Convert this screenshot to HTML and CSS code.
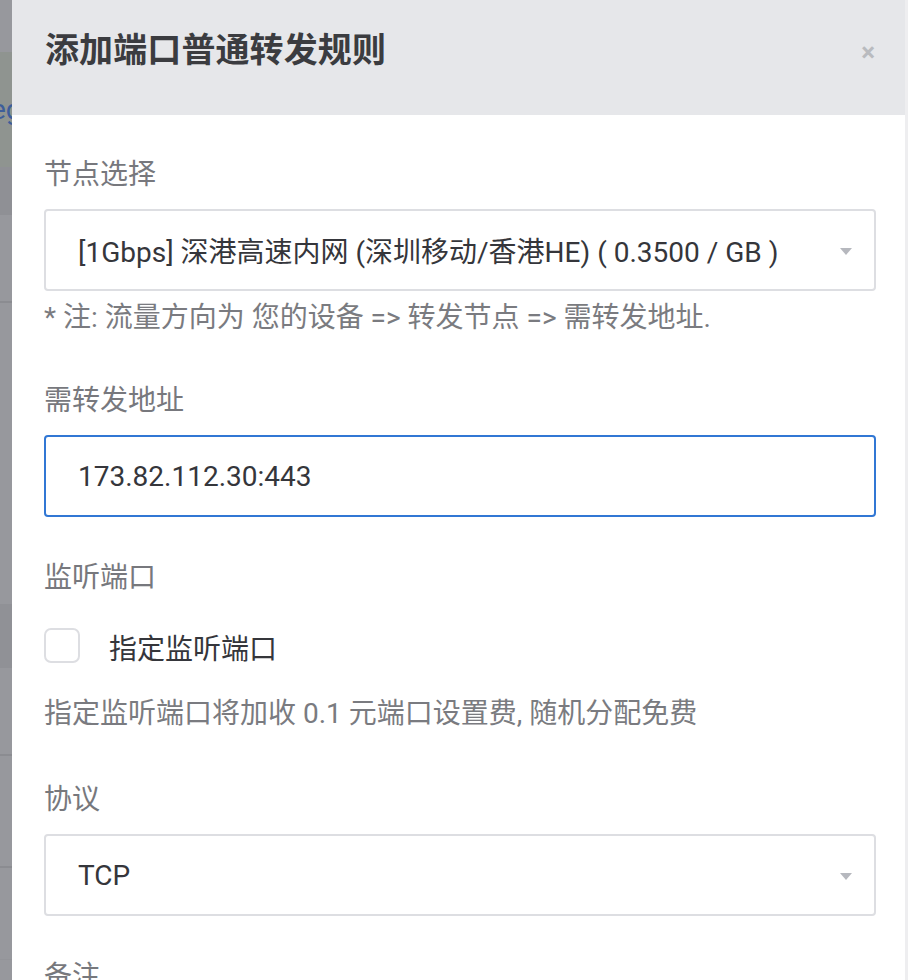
FILE: index.html
```html
<!DOCTYPE html>
<html lang="zh-CN">
<head>
<meta charset="utf-8">
<title>添加端口普通转发规则</title>
<link rel="stylesheet" href="styles.css">
</head>
<body>
<div class="screen">
  <div class="backdrop">
    <div class="bd-row r1"></div>
    <div class="bd-row r2"><span class="bd-text">eg</span></div>
    <div class="bd-row r3"></div>
    <div class="bd-row r4"></div>
    <div class="bd-row r5"></div>
    <div class="bd-row r6"></div>
    <div class="bd-row r7"></div>
    <div class="bd-row r8"></div>
    <div class="bd-row r9"></div>
    <div class="bd-row r10"></div>
  </div>
  <div class="modal">
    <div class="modal-header">
      <h1 class="modal-title">添加端口普通转发规则</h1>
      <span class="modal-close">×</span>
    </div>
    <div class="modal-body">
      <div class="label first">节点选择</div>
      <div class="field select">
        <span class="field-text">[1Gbps] 深港高速内网 (深圳移动/香港HE) ( 0.3500 / GB )</span>
        <span class="caret"></span>
      </div>
      <div class="note">* 注: 流量方向为 您的设备 =&gt; 转发节点 =&gt; 需转发地址.</div>

      <div class="label gap-note">需转发地址</div>
      <div class="field focused">
        <span class="field-text">173.82.112.30:443</span>
      </div>

      <div class="label gap-input">监听端口</div>
      <div class="check-row">
        <span class="checkbox"></span>
        <span class="check-text">指定监听端口</span>
      </div>
      <div class="help">指定监听端口将加收 0.1 元端口设置费, 随机分配免费</div>

      <div class="label gap-help">协议</div>
      <div class="field select">
        <span class="field-text">TCP</span>
        <span class="caret"></span>
      </div>

      <div class="label gap-input">备注</div>
    </div>
  </div>
  <div class="edge"></div>
</div>
</body>
</html>
```
FILE: styles.css
```css
* { box-sizing: border-box; }

html, body {
  margin: 0;
  padding: 0;
  height: 980px;
  overflow: hidden;
  background: #97989d;
  font-family: Roboto, "Noto Sans CJK SC", sans-serif;
}

.screen {
  display: flex;
  height: 980px;
}

.backdrop {
  width: 12px;
  flex: none;
  display: flex;
  flex-direction: column;
  overflow: hidden;
}

.bd-row { flex: none; background: #97989d; }
.r1 { height: 52px; }
.r2 { height: 115px; background: #8f9490; display: flex; align-items: center; overflow: hidden; }
.r3 { height: 48px; background: #8f9095; }
.r4 { height: 88px; border-bottom: 2px solid #8b8c91; }
.r5 { height: 301px; }
.r6 { height: 64px; background: #909196; }
.r7 { height: 88px; border-bottom: 2px solid #8b8c91; }
.r8 { height: 112px; border-bottom: 2px solid #8b8c91; }
.r9 { height: 92px; border-bottom: 1px solid #939499; }
.r10 { flex: 1; }

.bd-text {
  font-size: 28px;
  color: #3d5d9a;
  margin-left: -9px;
  line-height: 1;
  white-space: nowrap;
}

.modal {
  width: 893px;
  flex: none;
  background: #ffffff;
  display: flex;
  flex-direction: column;
}

.edge {
  flex: 1;
  background: #eeeef0;
}

.modal-header {
  height: 115px;
  flex: none;
  background: #e6e7ea;
  display: flex;
  align-items: center;
  justify-content: space-between;
  padding: 0 30px 0 33px;
}

.modal-title {
  margin: 0 0 20px 0;
  font-size: 34px;
  font-weight: 700;
  color: #3b3c40;
  letter-spacing: 0.1px;
}

.modal-close {
  font-size: 26px;
  font-weight: 700;
  color: #b9bbbf;
  line-height: 1;
  margin-top: -12px;
}

.modal-body {
  padding: 42px 29px 0 32px;
}

.label {
  font-size: 28px;
  line-height: 36px;
  color: #77787d;
}

.label.gap-note { margin-top: 47px; }
.label.gap-input { margin-top: 43px; }
.label.gap-help { margin-top: 50px; }

.field {
  margin-top: 16px;
  height: 82px;
  border: 2px solid #dddee2;
  border-radius: 4px;
  display: flex;
  align-items: center;
  justify-content: space-between;
  padding: 0 22px 0 32px;
}

.field.focused {
  border-color: #3177d4;
}

.field-text {
  font-size: 28px;
  color: #35363b;
  white-space: nowrap;
}

.caret {
  width: 0;
  height: 0;
  border-left: 6px solid transparent;
  border-right: 6px solid transparent;
  border-top: 7px solid #b6b8be;
  margin-top: 2px;
}

.note {
  margin-top: 9px;
  font-size: 28px;
  line-height: 36px;
  color: #7a7b80;
}

.check-row {
  margin-top: 31px;
  display: flex;
  align-items: center;
  height: 36px;
}

.checkbox {
  width: 36px;
  height: 35px;
  border: 2px solid #dddee2;
  border-radius: 7px;
  flex: none;
}

.check-text {
  margin-left: 29px;
  font-size: 28px;
  color: #35363b;
  margin-top: 3px;
}

.help {
  margin-top: 33px;
  font-size: 28px;
  line-height: 36px;
  color: #7a7b80;
}
```
